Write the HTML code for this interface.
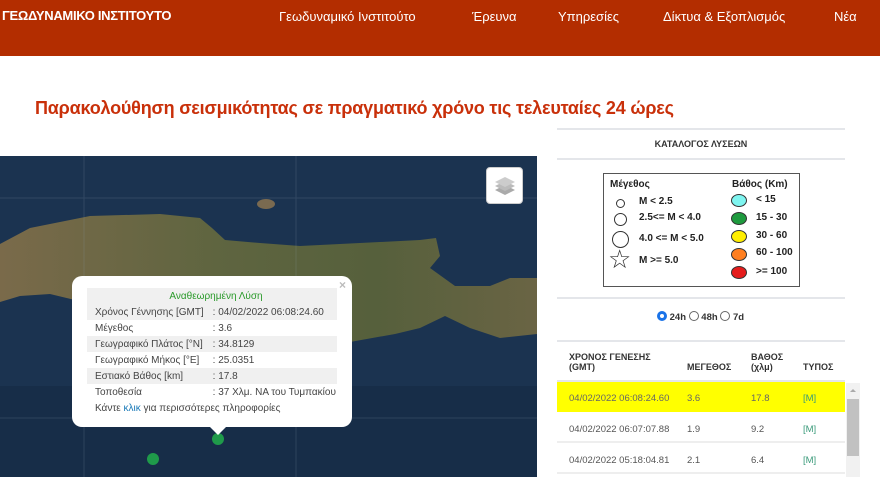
<!DOCTYPE html>
<html><head><meta charset="utf-8"><style>
*{margin:0;padding:0;box-sizing:border-box}
body{width:880px;height:477px;overflow:hidden;background:#fff;font-family:"Liberation Sans",sans-serif;position:relative}
.hdr{position:absolute;left:0;top:0;width:880px;height:56px;background:#b32d00;color:#fff}
.hdr .logo{position:absolute;left:2px;top:8px;font-weight:bold;font-size:13px;letter-spacing:-0.3px}
.hdr .nav{position:absolute;top:9px;font-size:13px}
h1{position:absolute;left:35px;top:98px;font-size:18px;color:#c9300a;font-weight:bold;letter-spacing:-0.2px}
.map{position:absolute;left:0;top:156px;width:537px;height:321px;overflow:hidden;background:#1f3a58}
.pop{position:absolute;left:72px;top:120px;width:280px;height:151px;background:#fff;border-radius:10px;font-size:10px;color:#444}
.pop table{position:absolute;left:15px;top:12px;width:250px;border-collapse:collapse}
.pop td{height:16px;padding-left:8px;white-space:nowrap}
.pop tr:nth-child(even) td{background:#f0f0f0}
.r{position:absolute;left:557px;width:288px}
.leg{position:absolute;left:603px;top:173px;width:197px;height:114px;border:1.5px solid #555;font-size:10px;font-weight:bold;color:#222}
.leg div{position:absolute}
.c{border:1px solid #333;border-radius:50%}
.th{position:absolute;font-size:9px;font-weight:bold;color:#333}
.row{position:absolute;left:557px;width:288px;height:30px;font-size:9.5px;color:#555;border-bottom:2px solid #eee}
.row span{position:absolute;top:11px}
</style></head><body>
<div class="hdr"><div class="logo">ΓΕΩΔΥΝΑΜΙΚΟ ΙΝΣΤΙΤΟΥΤΟ</div>
<div class="nav" style="left:279px">Γεωδυναμικό Ινστιτούτο</div>
<div class="nav" style="left:472px">Έρευνα</div>
<div class="nav" style="left:558px">Υπηρεσίες</div>
<div class="nav" style="left:663px">Δίκτυα &amp; Εξοπλισμός</div>
<div class="nav" style="left:834px">Νέα</div></div>
<h1>Παρακολούθηση σεισμικότητας σε πραγματικό χρόνο τις τελευταίες 24 ώρες</h1>
<div class="map">
<svg width="537" height="321" style="position:absolute;left:0;top:0">
<defs><linearGradient id="g" x1="0" y1="0" x2="1" y2="0"><stop offset="0" stop-color="#7a6a4a"/><stop offset="0.4" stop-color="#5f6540"/><stop offset="0.7" stop-color="#56603c"/><stop offset="1" stop-color="#6a6444"/></linearGradient></defs>
<rect width="537" height="321" fill="#1b3350"/>
<rect x="0" y="230" width="537" height="91" fill="#172d48"/>
<path d="M0,88 L30,72 L90,60 L160,58 L200,62 L212,72 L225,84 L260,87 L300,90 L340,88 L380,86 L420,84 L436,82 L440,100 L430,112 L455,130 L490,130 L510,122 L537,122 L537,178 L500,182 L470,172 L445,160 L420,172 L395,178 L350,186 L300,182 L250,182 L200,176 L150,165 L100,150 L50,138 L20,140 L0,146 Z" fill="url(#g)"/>
<path d="M0,42 H537 M0,262 H537 M84,0 V321 M296,0 V321" stroke="#8899aa" stroke-opacity=".2"/>
<ellipse cx="266" cy="48" rx="9" ry="5" fill="#7a6a50"/>
<circle cx="218" cy="283" r="6" fill="#1f9a4a"/>
<circle cx="153" cy="303" r="6" fill="#1f9a4a"/>
</svg>
<div style="position:absolute;left:486px;top:11px;width:37px;height:37px;background:#fff;border-radius:4px;border:1px solid #ccc">
<svg width="37" height="37"><path d="M8,22 L18,27 L28,22 L18,17Z" fill="#aaa"/><path d="M8,18 L18,23 L28,18 L18,13Z" fill="#bbb"/><path d="M8,14 L18,19 L28,14 L18,9Z" fill="#ccc"/></svg></div>
<div class="pop">
<div style="position:absolute;right:6px;top:2px;color:#bbb;font-size:12px;font-weight:bold">×</div>
<table>
<tr><td colspan="2" style="text-align:center;color:#2a9a2a;background:#f0f0f0">Αναθεωρημένη Λύση</td></tr>
<tr><td>Χρόνος Γέννησης [GMT]</td><td>: 04/02/2022 06:08:24.60</td></tr>
<tr><td>Μέγεθος</td><td>: 3.6</td></tr>
<tr><td>Γεωγραφικό Πλάτος [°N]</td><td>: 34.8129</td></tr>
<tr><td>Γεωγραφικό Μήκος [°E]</td><td>: 25.0351</td></tr>
<tr><td>Εστιακό Βάθος [km]</td><td>: 17.8</td></tr>
<tr><td>Τοποθεσία</td><td>: 37 Χλμ. ΝΑ του Τυμπακίου</td></tr>
<tr><td colspan="2" style="background:#fff">Κάντε <span style="color:#1a7ab8">κλικ</span> για περισσότερες πληροφορίες</td></tr>
</table>
<div style="position:absolute;left:138px;bottom:-8px;width:0;height:0;border-left:8px solid transparent;border-right:8px solid transparent;border-top:8px solid #fff"></div>
</div>
</div>
<div class="r" style="top:128px;height:2px;background:#e4e6ea"></div>
<div style="position:absolute;left:557px;width:288px;top:139px;text-align:center;font-size:9px;font-weight:bold;color:#333">ΚΑΤΑΛΟΓΟΣ ΛΥΣΕΩΝ</div>
<div class="r" style="top:158px;height:2px;background:#e4e6ea"></div>
<div class="leg">
<div style="left:6px;top:5px">Μέγεθος</div><div style="left:128px;top:5px">Βάθος (Km)</div>
<div class="c" style="left:12px;top:25px;width:9px;height:9px"></div><div style="left:35px;top:22px">M &lt; 2.5</div>
<div class="c" style="left:10px;top:39px;width:13px;height:13px"></div><div style="left:35px;top:38px">2.5&lt;= M &lt; 4.0</div>
<div class="c" style="left:8px;top:57px;width:17px;height:17px"></div><div style="left:35px;top:59px">4.0 &lt;= M &lt; 5.0</div>
<div style="left:4px;top:72px;font-size:26px;font-weight:normal;color:#333;line-height:26px">☆</div><div style="left:35px;top:81px">M &gt;= 5.0</div>
<div class="c" style="left:127px;top:20px;width:16px;height:13px;background:#7ff5f0"></div><div style="left:152px;top:20px">&lt; 15</div>
<div class="c" style="left:127px;top:38px;width:16px;height:13px;background:#1e9a3e"></div><div style="left:152px;top:38px">15 - 30</div>
<div class="c" style="left:127px;top:56px;width:16px;height:13px;background:#ffee00"></div><div style="left:152px;top:56px">30 - 60</div>
<div class="c" style="left:127px;top:74px;width:16px;height:13px;background:#ff7f20"></div><div style="left:152px;top:73px">60 - 100</div>
<div class="c" style="left:127px;top:92px;width:16px;height:13px;background:#e51c1c"></div><div style="left:152px;top:92px">&gt;= 100</div>
</div>
<div class="r" style="top:297px;height:2px;background:#e4e6ea"></div>
<div style="position:absolute;left:657px;top:311px;font-size:9.5px;font-weight:bold;color:#333">
<span style="display:inline-block;width:10px;height:10px;border-radius:50%;border:3px solid #1a73e8;vertical-align:-1px"></span> 24h <span style="display:inline-block;width:10px;height:10px;border-radius:50%;border:1px solid #666;vertical-align:-1px"></span> 48h <span style="display:inline-block;width:10px;height:10px;border-radius:50%;border:1px solid #666;vertical-align:-1px"></span> 7d</div>
<div class="r" style="top:340px;height:2px;background:#e4e6ea"></div>
<div class="th" style="left:569px;top:352px">ΧΡΟΝΟΣ ΓΕΝΕΣΗΣ<br>(GMT)</div>
<div class="th" style="left:687px;top:362px">ΜΕΓΕΘΟΣ</div>
<div class="th" style="left:751px;top:352px">ΒΑΘΟΣ<br>(χλμ)</div>
<div class="th" style="left:803px;top:362px">ΤΥΠΟΣ</div>
<div class="r" style="top:380px;height:2px;background:#e4e6ea"></div>
<div class="row" style="top:382px;background:#ffff00;border:none;color:#666"><span style="left:12px">04/02/2022 06:08:24.60</span><span style="left:130px">3.6</span><span style="left:194px">17.8</span><span style="left:246px;color:#3a9a7a">[M]</span></div>
<div class="row" style="top:413px"><span style="left:12px">04/02/2022 06:07:07.88</span><span style="left:130px">1.9</span><span style="left:194px">9.2</span><span style="left:246px;color:#3a9a7a">[M]</span></div>
<div class="row" style="top:444px"><span style="left:12px">04/02/2022 05:18:04.81</span><span style="left:130px">2.1</span><span style="left:194px">6.4</span><span style="left:246px;color:#3a9a7a">[M]</span></div>
<div style="position:absolute;left:846px;top:383px;width:14px;height:94px;background:#f1f1f1"></div>
<div style="position:absolute;left:847px;top:399px;width:12px;height:57px;background:#c1c1c1"></div>
<div style="position:absolute;left:850px;top:389px;border-left:3px solid transparent;border-right:3px solid transparent;border-bottom:3px solid #aaa"></div>
</body></html>
